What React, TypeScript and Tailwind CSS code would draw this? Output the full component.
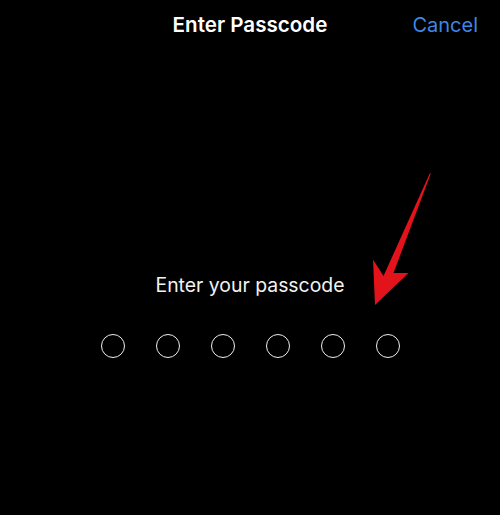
import React from 'react';

const font = { fontFamily: 'Inter, "Liberation Sans", sans-serif' };

function ArrowMark() {
  // red annotation arrow drawn over the screenshot
  return (
    <svg
      className="absolute inset-0 pointer-events-none"
      width={500}
      height={515}
      viewBox="0 0 500 515"
    >
      <polygon
        points="431,173 393.5,273 408.5,273 375,305 373,259.5 383.5,276 429.5,174"
        fill="#e3131b"
      />
    </svg>
  );
}

export default function App() {
  const dots = [0, 1, 2, 3, 4, 5];

  return (
    <div className="relative w-[500px] h-[515px] bg-black text-white overflow-hidden" style={font}>
      {/* Header */}
      <div className="grid grid-cols-[1fr_auto_1fr] items-center h-[50px]">
        <div />
        <div className="text-[20.6px] leading-[28px] font-semibold">Enter Passcode</div>
        <div className="justify-self-end pr-[22px] text-[20px] leading-[28px] text-[#3f86e6]">
          Cancel
        </div>
      </div>

      {/* Body */}
      <div className="flex flex-col items-center mt-[223px]">
        <div className="text-[19.4px] leading-[25px] text-[#f2f2f2]">Enter your passcode</div>
        <div className="flex gap-[31px] mt-[36px]">
          {dots.map((d) => (
            <div key={d} className="w-6 h-6 rounded-full border-[1.6px] border-[#f0f0f0]" />
          ))}
        </div>
      </div>

      <ArrowMark />
    </div>
  );
}
